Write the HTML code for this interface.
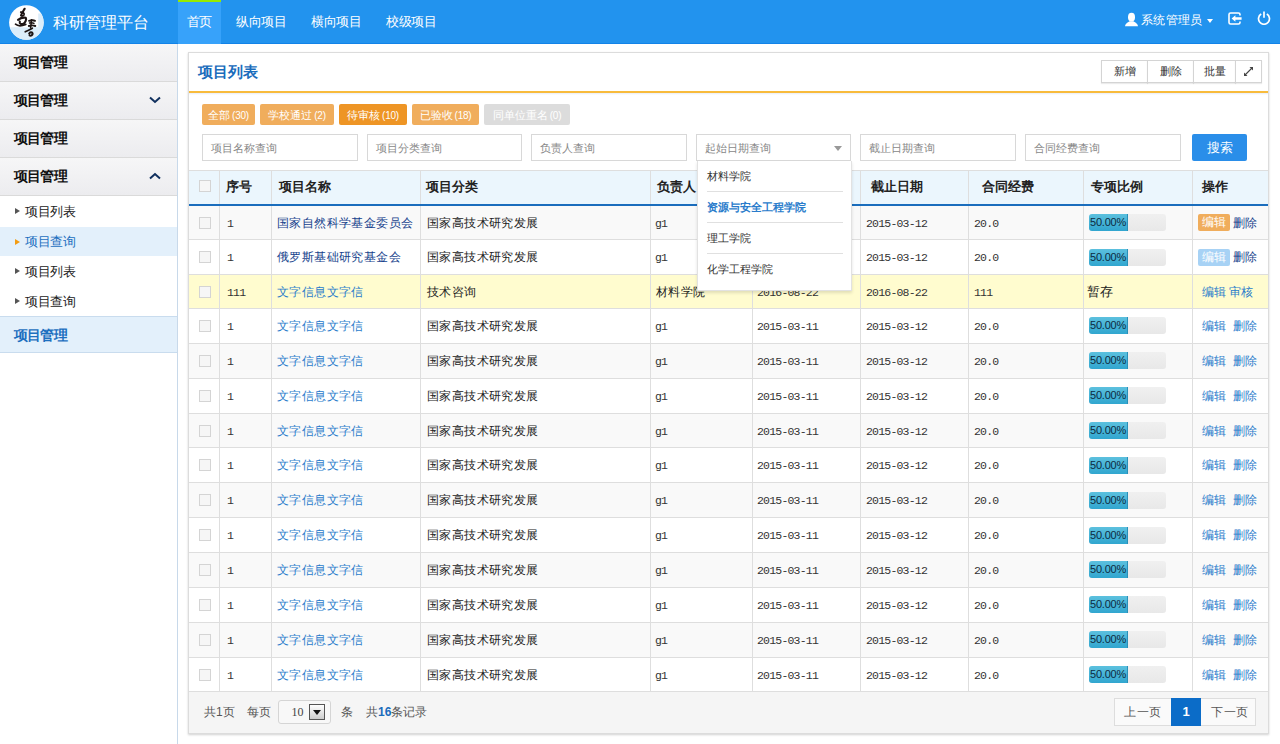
<!DOCTYPE html>
<html><head><meta charset="utf-8"><style>
*{box-sizing:border-box;margin:0;padding:0}
html,body{width:1280px;height:744px;overflow:hidden;background:#fff;font-family:"Liberation Sans",sans-serif;font-size:12px;color:#333}
.a{position:absolute}
#hdr{left:0;top:0;width:1280px;height:44px;background:#2293ee;border-bottom:1px solid #1283e8}
#logo{left:9px;top:5px;width:35px;height:35px;border-radius:50%;background:#fff;overflow:hidden}
#brand{left:53px;top:11px;font-size:16px;color:#fff;line-height:24px;white-space:nowrap}
.nav{top:0;height:44px;line-height:43px;font-size:13px;letter-spacing:-0.4px;color:#fff;white-space:nowrap}
#nav0{left:178px;width:43px;height:44px;background:#37a2fa;text-align:center}
#nav0:before{content:"";position:absolute;left:0;top:0;width:43px;height:2px;background:#97ea00}
#side{left:0;top:44px;width:178px;height:700px;border-right:1px solid #c8d9ea;background:#fff}
.mi{position:relative;height:38px;line-height:37px;border-bottom:1px solid #dadada;background:linear-gradient(#f6f6f7,#ececef);font-size:14px;letter-spacing:-0.8px;font-weight:bold;color:#111;padding-left:14px;white-space:nowrap}
.chev{position:absolute;left:149px;top:14px}
.si{position:relative;height:30px;line-height:30px;font-size:13px;letter-spacing:-0.3px;color:#222;padding-left:25px;white-space:nowrap}
.si:before{content:"";position:absolute;left:15px;top:11.5px;border-left:5px solid #555;border-top:3.5px solid transparent;border-bottom:3.5px solid transparent}
.si.on{background:#e3f0fb;color:#1d6fbf}
.si.on:before{border-left-color:#f39c12}
#panel{left:188px;top:52px;width:1081px;height:682px;border:1px solid #dcdcdc;box-shadow:0 1px 2px rgba(0,0,0,.18);background:#fff}
#ptitle{left:198px;top:60px;font-size:15px;font-weight:bold;color:#1a6cbc;line-height:24px;white-space:nowrap}
#oline{left:189px;top:91px;width:1079px;height:2px;background:#f8bb3c}
#oshadow{left:189px;top:93px;width:1079px;height:2px;background:linear-gradient(#e9edf5,#fff)}
.bg{top:60px;height:23px;border:1px solid #d4d4d4;background:#fff;font-size:11px;line-height:20px;text-align:center;color:#333;box-shadow:0 1px 1px rgba(0,0,0,.08)}
.fb{top:104px;height:21px;line-height:22px;border-radius:2px;color:#fff;font-size:11px;text-align:center;white-space:nowrap}
.inp{top:134px;width:156px;height:27px;border:1px solid #d8d8d8;line-height:27px;padding-left:8px;color:#888;font-size:11px;white-space:nowrap}
#search{left:1192px;top:134px;width:55px;height:27px;background:#2a8ee9;border-radius:2px;color:#fff;font-size:13px;line-height:27px;text-align:center}
#thead{left:189px;top:170px;width:1079px;height:34px;background:#ebf6fd;border-top:1px solid #dedede}
#tline{left:189px;top:204px;width:1079px;height:2px;background:#1a6dbd}
.th{top:171px;height:33px;line-height:31px;font-size:13px;font-weight:bold;color:#222;white-space:nowrap}
.vl{width:1px;background:#dedede}
.row{left:189px;width:1079px;border-bottom:1px solid #dedede}
.td{font-size:12px;letter-spacing:0.4px;color:#333;white-space:nowrap}
.mono{font-family:"Liberation Mono",monospace;font-size:11.5px;letter-spacing:-0.8px;color:#333}
.cb{width:12px;height:12px;border:1px solid #d4d4d4;background:#f6f6f6}
.pb{width:77px;height:17px;border-radius:3px;background:linear-gradient(#f0f0f0,#e8e8e8);overflow:hidden}
.pbf{left:0;top:0;width:39px;height:17px;background:linear-gradient(#5bc0de,#31a6cf);border-right:1px solid #2a8fb8;color:#0d2b3f;font-size:11px;letter-spacing:-0.2px;line-height:17px;padding-left:1px;white-space:nowrap}
.fb s{text-decoration:none;font-size:10px;margin-left:2px;letter-spacing:-0.2px}
.eb{width:32px;height:17px;border-radius:2px;color:#fff;font-size:12px;line-height:17px;text-align:center}
.lk{color:#2a7ccb;font-size:12px;white-space:nowrap}
#foot{left:189px;top:692px;width:1079px;height:41px;background:#f5f5f5}
#dd{left:696.5px;top:161px;width:155.5px;height:130px;background:#fff;border:1px solid #e2e2e2;border-top:none;box-shadow:0 2px 3px rgba(0,0,0,.12)}
.ddi{left:9px;width:136px;height:31px;line-height:31px;font-size:11px;color:#333;border-bottom:1px solid #e0e0e0;white-space:nowrap}
</style></head><body>
<div id="hdr" class="a">
<svg class="a" style="left:8px;top:4px" width="38" height="38" viewBox="0 0 38 38"><defs><clipPath id="cc"><circle cx="18.4" cy="18.5" r="17.3"/></clipPath></defs><circle cx="18.4" cy="18.5" r="17.3" fill="#fff"/><g clip-path="url(#cc)" fill="#dcedfa"><path d="M0 23.5 C10 23 20 24 30.5 23 L30.5 40 L0 40Z"/><path d="M30.2 9.5 L40 9.5 L40 40 L30.2 40Z"/></g><g fill="none" stroke="#1d1414" stroke-linecap="round" stroke-linejoin="round"><path d="M16.6 4.8 C15.8 6.5 14 8.5 13.2 11.2" stroke-width="2.2"/><path d="M12.8 8.2 C14.8 8 16.5 8.8 16 10.8 C15.5 12.2 13.8 12.2 13 11.6" stroke-width="1.8"/><path d="M10 15.8 C12.5 14 15.5 13.4 17.8 13.8 C18.8 15.5 17.2 19.2 14.8 20 C12.8 20.5 11.3 19.6 11.8 17.6" stroke-width="2.1"/><path d="M7.5 20.2 C9.5 22 13.5 22.2 17.8 20.4" stroke-width="1.7"/><path d="M21 16.8 C23 16.2 25.5 16 27 16.8" stroke-width="1.9"/><path d="M23.5 15.8 C23.3 18.5 23 21 22.6 24" stroke-width="1.6"/><path d="M21.5 19 C23 18.6 25 18.8 26 19.4" stroke-width="1.4"/><path d="M20.8 22 C23 21.2 25.5 21.3 27.3 22" stroke-width="1.9"/><path d="M17.2 27.8 C19.5 26.6 22 25.6 24.4 24.2" stroke-width="1.6"/><path d="M21.2 29.6 C21.8 28 24.2 27.6 24.6 29.4 C24.8 31.2 22.8 32.2 21.6 31.4" stroke-width="2.1"/></g></svg>
<div id="brand" class="a">科研管理平台</div>
<div class="a nav" id="nav0">首页</div>
<div class="a nav" style="left:236px">纵向项目</div>
<div class="a nav" style="left:311px">横向项目</div>
<div class="a nav" style="left:386px">校级项目</div>
<svg class="a" style="left:1124px;top:12px" width="15" height="15" viewBox="0 0 15 15"><ellipse cx="7.5" cy="5.2" rx="3.5" ry="4.4" fill="#fff"/><path d="M1 14.2 L1.4 12.8 C2.2 11.2 4 10.2 5.6 9.2 L9.4 9.2 C11 10.2 12.8 11.2 13.6 12.8 L14 14.2Z" fill="#fff"/></svg>
<div class="a" style="left:1141px;top:11px;font-size:12px;letter-spacing:0.3px;color:#fff;line-height:18px;white-space:nowrap">系统管理员</div>
<div class="a" style="left:1207px;top:19px;border-top:4px solid #fff;border-left:3.5px solid transparent;border-right:3.5px solid transparent"></div>
<svg class="a" style="left:1228px;top:12px" width="14" height="13" viewBox="0 0 14 13"><path d="M12 3.6 V2.6 Q12 1 10.4 1 H2.6 Q1 1 1 2.6 V10.4 Q1 12 2.6 12 H10.4 Q12 12 12 10.4 V9.4" fill="none" stroke="#fff" stroke-width="1.6"/><path d="M3.6 6.5 L7.4 3.2 V5.3 H13.6 V7.7 H7.4 V9.8Z" fill="#fff"/></svg>
<svg class="a" style="left:1257px;top:11px" width="14" height="14" viewBox="0 0 14 14"><path d="M4.2 3 A5.5 5.5 0 1 0 9.8 3" fill="none" stroke="#fff" stroke-width="1.7"/><path d="M7 0.5 V6.8" stroke="#fff" stroke-width="1.7"/></svg>
</div>
<div id="side" class="a">
<div class="mi">项目管理</div>
<div class="mi">项目管理<svg class="chev" width="12" height="8" viewBox="0 0 12 8"><path d="M1 1.5 L6 6 L11 1.5" fill="none" stroke="#10305e" stroke-width="2"/></svg></div>
<div class="mi">项目管理</div>
<div class="mi">项目管理<svg class="chev" width="12" height="8" viewBox="0 0 12 8"><path d="M1 6.5 L6 2 L11 6.5" fill="none" stroke="#10305e" stroke-width="2"/></svg></div>
<div class="si" style="height:31px;line-height:32px">项目列表</div>
<div class="si on" style="height:29px;line-height:29px">项目查询</div>
<div class="si" style="line-height:31px">项目列表</div>
<div class="si" style="line-height:31px">项目查询</div>
<div class="mi" style="background:#e3f0fb;color:#1d6fbf;border-top:1px solid #c9dcee;border-bottom:1px solid #c9dcee;height:37px">项目管理</div>
</div>
<div id="panel" class="a"></div>
<div id="ptitle" class="a">项目列表</div>
<div id="oline" class="a"></div><div id="oshadow" class="a"></div>
<div class="a bg" style="left:1101px;width:47px">新增</div>
<div class="a bg" style="left:1147px;width:47px">删除</div>
<div class="a bg" style="left:1193px;width:43px">批量</div>
<div class="a bg" style="left:1235px;width:27px"><svg style="position:absolute;left:7px;top:5px" width="11" height="11" viewBox="0 0 11 11"><path d="M2 9 L9 2" stroke="#444" stroke-width="1.1"/><path d="M6.5 1 H10 V4.5Z M1 6.5 V10 H4.5Z" fill="#444"/></svg></div>
<div class="a fb" style="left:202px;width:53px;background:#f0ad5c">全部<s>(30)</s></div>
<div class="a fb" style="left:260px;width:74px;background:#f0ad5c">学校通过<s>(2)</s></div>
<div class="a fb" style="left:339px;width:68px;background:#ee9525">待审核<s>(10)</s></div>
<div class="a fb" style="left:412px;width:67px;background:#f0ad5c">已验收<s>(18)</s></div>
<div class="a fb" style="left:484px;width:86px;background:#dcdcdc">同单位重名<s>(0)</s></div>
<div class="a inp" style="left:202.00px;width:155.6px">项目名称查询</div>
<div class="a inp" style="left:366.60px;width:155.6px">项目分类查询</div>
<div class="a inp" style="left:531.20px;width:155.6px">负责人查询</div>
<div class="a inp" style="left:695.80px;width:155.6px">起始日期查询</div>
<div class="a inp" style="left:860.40px;width:155.6px">截止日期查询</div>
<div class="a inp" style="left:1025.00px;width:155.6px">合同经费查询</div>
<div class="a" style="left:834px;top:146px;border-top:5px solid #999;border-left:4px solid transparent;border-right:4px solid transparent"></div>
<div id="search" class="a">搜索</div>
<div id="thead" class="a"></div>
<div class="a cb" style="left:199px;top:180px"></div>
<div class="a th" style="left:226px">序号</div>
<div class="a th" style="left:279px">项目名称</div>
<div class="a th" style="left:426px">项目分类</div>
<div class="a th" style="left:656.5px">负责人</div>
<div class="a th" style="left:760px">起始日期</div>
<div class="a th" style="left:870.5px">截止日期</div>
<div class="a th" style="left:981.5px">合同经费</div>
<div class="a th" style="left:1091px">专项比例</div>
<div class="a th" style="left:1201.5px">操作</div>
<div class="a row" style="top:206.000px;height:34.000px;background:#f9f9f9;border-top:none"></div>
<div class="a cb" style="left:199px;top:217.000px"></div>
<div class="a td mono" style="left:227px;top:216.500px;line-height:14px">1</div>
<div class="a td" style="left:277px;top:213.500px;line-height:18px;color:#163f8c">国家自然科学基金委员会</div>
<div class="a td" style="left:427px;top:213.500px;line-height:18px;color:#222">国家高技术研究发展</div>
<div class="a td mono" style="left:655px;top:216.500px;line-height:14px">g1</div>
<div class="a td mono" style="left:757px;top:216.500px;line-height:14px">2015-03-12</div>
<div class="a td mono" style="left:866px;top:216.500px;line-height:14px">2015-03-12</div>
<div class="a td mono" style="left:974px;top:216.500px;line-height:14px">20.0</div>
<div class="a pb" style="left:1089px;top:214.000px"><div class="a pbf">50.00%</div></div>
<div class="a eb" style="left:1198px;top:214.000px;background:#f0ad5c">编辑</div>
<div class="a lk" style="left:1233px;top:213.500px;line-height:18px;color:#163f8c">删除</div>
<div class="a row" style="top:240.000px;height:35.000px;background:#fff;border-top:none"></div>
<div class="a cb" style="left:199px;top:251.000px"></div>
<div class="a td mono" style="left:227px;top:251.000px;line-height:14px">1</div>
<div class="a td" style="left:277px;top:248.000px;line-height:18px;color:#163f8c">俄罗斯基础研究基金会</div>
<div class="a td" style="left:427px;top:248.000px;line-height:18px;color:#222">国家高技术研究发展</div>
<div class="a td mono" style="left:655px;top:251.000px;line-height:14px">g1</div>
<div class="a td mono" style="left:757px;top:251.000px;line-height:14px">2015-03-12</div>
<div class="a td mono" style="left:866px;top:251.000px;line-height:14px">2015-03-12</div>
<div class="a td mono" style="left:974px;top:251.000px;line-height:14px">20.0</div>
<div class="a pb" style="left:1089px;top:248.500px"><div class="a pbf">50.00%</div></div>
<div class="a eb" style="left:1198px;top:248.500px;background:#a7d2f5">编辑</div>
<div class="a lk" style="left:1233px;top:248.000px;line-height:18px;color:#163f8c">删除</div>
<div class="a row" style="top:275.000px;height:34.000px;background:#fffccf;border-top:none"></div>
<div class="a cb" style="left:199px;top:286.000px"></div>
<div class="a td mono" style="left:227px;top:285.500px;line-height:14px">111</div>
<div class="a td" style="left:277px;top:282.500px;line-height:18px;color:#2a7ccb">文字信息文字信</div>
<div class="a td" style="left:427px;top:282.500px;line-height:18px;color:#222">技术咨询</div>
<div class="a td" style="left:656px;top:282.500px;line-height:18px;color:#222">材料学院</div>
<div class="a td mono" style="left:757px;top:285.500px;line-height:14px">2016-08-22</div>
<div class="a td mono" style="left:866px;top:285.500px;line-height:14px">2016-08-22</div>
<div class="a td mono" style="left:974px;top:285.500px;line-height:14px">111</div>
<div class="a td" style="left:1087px;top:282.500px;line-height:18px;color:#222;font-size:13px">暂存</div>
<div class="a lk" style="left:1202px;top:282.500px;line-height:18px">编辑 审核</div>
<div class="a row" style="top:309.000px;height:34.860px;background:#fff;border-top:none"></div>
<div class="a cb" style="left:199px;top:320.000px"></div>
<div class="a td mono" style="left:227px;top:319.930px;line-height:14px">1</div>
<div class="a td" style="left:277px;top:316.930px;line-height:18px;color:#2a7ccb">文字信息文字信</div>
<div class="a td" style="left:427px;top:316.930px;line-height:18px;color:#222">国家高技术研究发展</div>
<div class="a td mono" style="left:655px;top:319.930px;line-height:14px">g1</div>
<div class="a td mono" style="left:757px;top:319.930px;line-height:14px">2015-03-11</div>
<div class="a td mono" style="left:866px;top:319.930px;line-height:14px">2015-03-12</div>
<div class="a td mono" style="left:974px;top:319.930px;line-height:14px">20.0</div>
<div class="a pb" style="left:1089px;top:317.430px"><div class="a pbf">50.00%</div></div>
<div class="a lk" style="left:1202px;top:316.930px;line-height:18px">编辑</div>
<div class="a lk" style="left:1233px;top:316.930px;line-height:18px">删除</div>
<div class="a row" style="top:343.860px;height:34.860px;background:#f9f9f9;border-top:none"></div>
<div class="a cb" style="left:199px;top:354.860px"></div>
<div class="a td mono" style="left:227px;top:354.790px;line-height:14px">1</div>
<div class="a td" style="left:277px;top:351.790px;line-height:18px;color:#2a7ccb">文字信息文字信</div>
<div class="a td" style="left:427px;top:351.790px;line-height:18px;color:#222">国家高技术研究发展</div>
<div class="a td mono" style="left:655px;top:354.790px;line-height:14px">g1</div>
<div class="a td mono" style="left:757px;top:354.790px;line-height:14px">2015-03-11</div>
<div class="a td mono" style="left:866px;top:354.790px;line-height:14px">2015-03-12</div>
<div class="a td mono" style="left:974px;top:354.790px;line-height:14px">20.0</div>
<div class="a pb" style="left:1089px;top:352.290px"><div class="a pbf">50.00%</div></div>
<div class="a lk" style="left:1202px;top:351.790px;line-height:18px">编辑</div>
<div class="a lk" style="left:1233px;top:351.790px;line-height:18px">删除</div>
<div class="a row" style="top:378.720px;height:34.860px;background:#fff;border-top:none"></div>
<div class="a cb" style="left:199px;top:389.720px"></div>
<div class="a td mono" style="left:227px;top:389.650px;line-height:14px">1</div>
<div class="a td" style="left:277px;top:386.650px;line-height:18px;color:#2a7ccb">文字信息文字信</div>
<div class="a td" style="left:427px;top:386.650px;line-height:18px;color:#222">国家高技术研究发展</div>
<div class="a td mono" style="left:655px;top:389.650px;line-height:14px">g1</div>
<div class="a td mono" style="left:757px;top:389.650px;line-height:14px">2015-03-11</div>
<div class="a td mono" style="left:866px;top:389.650px;line-height:14px">2015-03-12</div>
<div class="a td mono" style="left:974px;top:389.650px;line-height:14px">20.0</div>
<div class="a pb" style="left:1089px;top:387.150px"><div class="a pbf">50.00%</div></div>
<div class="a lk" style="left:1202px;top:386.650px;line-height:18px">编辑</div>
<div class="a lk" style="left:1233px;top:386.650px;line-height:18px">删除</div>
<div class="a row" style="top:413.580px;height:34.860px;background:#f9f9f9;border-top:none"></div>
<div class="a cb" style="left:199px;top:424.580px"></div>
<div class="a td mono" style="left:227px;top:424.510px;line-height:14px">1</div>
<div class="a td" style="left:277px;top:421.510px;line-height:18px;color:#2a7ccb">文字信息文字信</div>
<div class="a td" style="left:427px;top:421.510px;line-height:18px;color:#222">国家高技术研究发展</div>
<div class="a td mono" style="left:655px;top:424.510px;line-height:14px">g1</div>
<div class="a td mono" style="left:757px;top:424.510px;line-height:14px">2015-03-11</div>
<div class="a td mono" style="left:866px;top:424.510px;line-height:14px">2015-03-12</div>
<div class="a td mono" style="left:974px;top:424.510px;line-height:14px">20.0</div>
<div class="a pb" style="left:1089px;top:422.010px"><div class="a pbf">50.00%</div></div>
<div class="a lk" style="left:1202px;top:421.510px;line-height:18px">编辑</div>
<div class="a lk" style="left:1233px;top:421.510px;line-height:18px">删除</div>
<div class="a row" style="top:448.440px;height:34.860px;background:#fff;border-top:none"></div>
<div class="a cb" style="left:199px;top:459.440px"></div>
<div class="a td mono" style="left:227px;top:459.370px;line-height:14px">1</div>
<div class="a td" style="left:277px;top:456.370px;line-height:18px;color:#2a7ccb">文字信息文字信</div>
<div class="a td" style="left:427px;top:456.370px;line-height:18px;color:#222">国家高技术研究发展</div>
<div class="a td mono" style="left:655px;top:459.370px;line-height:14px">g1</div>
<div class="a td mono" style="left:757px;top:459.370px;line-height:14px">2015-03-11</div>
<div class="a td mono" style="left:866px;top:459.370px;line-height:14px">2015-03-12</div>
<div class="a td mono" style="left:974px;top:459.370px;line-height:14px">20.0</div>
<div class="a pb" style="left:1089px;top:456.870px"><div class="a pbf">50.00%</div></div>
<div class="a lk" style="left:1202px;top:456.370px;line-height:18px">编辑</div>
<div class="a lk" style="left:1233px;top:456.370px;line-height:18px">删除</div>
<div class="a row" style="top:483.300px;height:34.860px;background:#f9f9f9;border-top:none"></div>
<div class="a cb" style="left:199px;top:494.300px"></div>
<div class="a td mono" style="left:227px;top:494.230px;line-height:14px">1</div>
<div class="a td" style="left:277px;top:491.230px;line-height:18px;color:#2a7ccb">文字信息文字信</div>
<div class="a td" style="left:427px;top:491.230px;line-height:18px;color:#222">国家高技术研究发展</div>
<div class="a td mono" style="left:655px;top:494.230px;line-height:14px">g1</div>
<div class="a td mono" style="left:757px;top:494.230px;line-height:14px">2015-03-11</div>
<div class="a td mono" style="left:866px;top:494.230px;line-height:14px">2015-03-12</div>
<div class="a td mono" style="left:974px;top:494.230px;line-height:14px">20.0</div>
<div class="a pb" style="left:1089px;top:491.730px"><div class="a pbf">50.00%</div></div>
<div class="a lk" style="left:1202px;top:491.230px;line-height:18px">编辑</div>
<div class="a lk" style="left:1233px;top:491.230px;line-height:18px">删除</div>
<div class="a row" style="top:518.160px;height:34.860px;background:#fff;border-top:none"></div>
<div class="a cb" style="left:199px;top:529.160px"></div>
<div class="a td mono" style="left:227px;top:529.090px;line-height:14px">1</div>
<div class="a td" style="left:277px;top:526.090px;line-height:18px;color:#2a7ccb">文字信息文字信</div>
<div class="a td" style="left:427px;top:526.090px;line-height:18px;color:#222">国家高技术研究发展</div>
<div class="a td mono" style="left:655px;top:529.090px;line-height:14px">g1</div>
<div class="a td mono" style="left:757px;top:529.090px;line-height:14px">2015-03-11</div>
<div class="a td mono" style="left:866px;top:529.090px;line-height:14px">2015-03-12</div>
<div class="a td mono" style="left:974px;top:529.090px;line-height:14px">20.0</div>
<div class="a pb" style="left:1089px;top:526.590px"><div class="a pbf">50.00%</div></div>
<div class="a lk" style="left:1202px;top:526.090px;line-height:18px">编辑</div>
<div class="a lk" style="left:1233px;top:526.090px;line-height:18px">删除</div>
<div class="a row" style="top:553.020px;height:34.860px;background:#f9f9f9;border-top:none"></div>
<div class="a cb" style="left:199px;top:564.020px"></div>
<div class="a td mono" style="left:227px;top:563.950px;line-height:14px">1</div>
<div class="a td" style="left:277px;top:560.950px;line-height:18px;color:#2a7ccb">文字信息文字信</div>
<div class="a td" style="left:427px;top:560.950px;line-height:18px;color:#222">国家高技术研究发展</div>
<div class="a td mono" style="left:655px;top:563.950px;line-height:14px">g1</div>
<div class="a td mono" style="left:757px;top:563.950px;line-height:14px">2015-03-11</div>
<div class="a td mono" style="left:866px;top:563.950px;line-height:14px">2015-03-12</div>
<div class="a td mono" style="left:974px;top:563.950px;line-height:14px">20.0</div>
<div class="a pb" style="left:1089px;top:561.450px"><div class="a pbf">50.00%</div></div>
<div class="a lk" style="left:1202px;top:560.950px;line-height:18px">编辑</div>
<div class="a lk" style="left:1233px;top:560.950px;line-height:18px">删除</div>
<div class="a row" style="top:587.880px;height:34.860px;background:#fff;border-top:none"></div>
<div class="a cb" style="left:199px;top:598.880px"></div>
<div class="a td mono" style="left:227px;top:598.810px;line-height:14px">1</div>
<div class="a td" style="left:277px;top:595.810px;line-height:18px;color:#2a7ccb">文字信息文字信</div>
<div class="a td" style="left:427px;top:595.810px;line-height:18px;color:#222">国家高技术研究发展</div>
<div class="a td mono" style="left:655px;top:598.810px;line-height:14px">g1</div>
<div class="a td mono" style="left:757px;top:598.810px;line-height:14px">2015-03-11</div>
<div class="a td mono" style="left:866px;top:598.810px;line-height:14px">2015-03-12</div>
<div class="a td mono" style="left:974px;top:598.810px;line-height:14px">20.0</div>
<div class="a pb" style="left:1089px;top:596.310px"><div class="a pbf">50.00%</div></div>
<div class="a lk" style="left:1202px;top:595.810px;line-height:18px">编辑</div>
<div class="a lk" style="left:1233px;top:595.810px;line-height:18px">删除</div>
<div class="a row" style="top:622.740px;height:34.860px;background:#f9f9f9;border-top:none"></div>
<div class="a cb" style="left:199px;top:633.740px"></div>
<div class="a td mono" style="left:227px;top:633.670px;line-height:14px">1</div>
<div class="a td" style="left:277px;top:630.670px;line-height:18px;color:#2a7ccb">文字信息文字信</div>
<div class="a td" style="left:427px;top:630.670px;line-height:18px;color:#222">国家高技术研究发展</div>
<div class="a td mono" style="left:655px;top:633.670px;line-height:14px">g1</div>
<div class="a td mono" style="left:757px;top:633.670px;line-height:14px">2015-03-11</div>
<div class="a td mono" style="left:866px;top:633.670px;line-height:14px">2015-03-12</div>
<div class="a td mono" style="left:974px;top:633.670px;line-height:14px">20.0</div>
<div class="a pb" style="left:1089px;top:631.170px"><div class="a pbf">50.00%</div></div>
<div class="a lk" style="left:1202px;top:630.670px;line-height:18px">编辑</div>
<div class="a lk" style="left:1233px;top:630.670px;line-height:18px">删除</div>
<div class="a row" style="top:657.600px;height:34.860px;background:#fff;border-top:none"></div>
<div class="a cb" style="left:199px;top:668.600px"></div>
<div class="a td mono" style="left:227px;top:668.530px;line-height:14px">1</div>
<div class="a td" style="left:277px;top:665.530px;line-height:18px;color:#2a7ccb">文字信息文字信</div>
<div class="a td" style="left:427px;top:665.530px;line-height:18px;color:#222">国家高技术研究发展</div>
<div class="a td mono" style="left:655px;top:668.530px;line-height:14px">g1</div>
<div class="a td mono" style="left:757px;top:668.530px;line-height:14px">2015-03-11</div>
<div class="a td mono" style="left:866px;top:668.530px;line-height:14px">2015-03-12</div>
<div class="a td mono" style="left:974px;top:668.530px;line-height:14px">20.0</div>
<div class="a pb" style="left:1089px;top:666.030px"><div class="a pbf">50.00%</div></div>
<div class="a lk" style="left:1202px;top:665.530px;line-height:18px">编辑</div>
<div class="a lk" style="left:1233px;top:665.530px;line-height:18px">删除</div>
<div class="a vl" style="left:219px;top:171px;height:520px"></div>
<div class="a vl" style="left:271px;top:171px;height:520px"></div>
<div class="a vl" style="left:420px;top:171px;height:520px"></div>
<div class="a vl" style="left:650px;top:171px;height:520px"></div>
<div class="a vl" style="left:752px;top:171px;height:520px"></div>
<div class="a vl" style="left:860px;top:171px;height:520px"></div>
<div class="a vl" style="left:968px;top:171px;height:520px"></div>
<div class="a vl" style="left:1083px;top:171px;height:520px"></div>
<div class="a vl" style="left:1192px;top:171px;height:520px"></div>
<div id="tline" class="a"></div>
<div id="foot" class="a"></div>
<div class="a" style="left:204px;top:703px;line-height:18px;font-size:12px;color:#555;white-space:nowrap">共1页</div>
<div class="a" style="left:247px;top:703px;line-height:18px;font-size:12px;color:#555;white-space:nowrap">每页</div>
<div class="a" style="left:278px;top:699.5px;width:53px;height:24.5px;border:1px solid #d5d5d5;border-radius:3px;background:#f8f8f8"></div>
<div class="a" style="left:291.5px;top:703px;line-height:18px;font-size:12px;font-family:'Liberation Serif',serif;color:#444">10</div>
<div class="a" style="left:309px;top:704px;width:15.5px;height:16px;border:1px solid #555;background:linear-gradient(#fff,#ccc)"><div class="a" style="left:3px;top:5px;border-top:5px solid #111;border-left:4px solid transparent;border-right:4px solid transparent"></div></div>
<div class="a" style="left:341px;top:703px;line-height:18px;font-size:12px;color:#555">条</div>
<div class="a" style="left:366px;top:703px;line-height:18px;font-size:12px;color:#555;white-space:nowrap">共<b style="color:#1a6cbc">16</b>条记录</div>
<div class="a" style="left:1114px;top:698px;width:142px;height:28px;border:1px solid #ddd;background:#fafafa"></div>
<div class="a" style="left:1124px;top:703px;line-height:18px;font-size:12px;letter-spacing:0.5px;color:#555">上一页</div>
<div class="a" style="left:1171px;top:698px;width:30px;height:28px;background:#0b6cc8;color:#fff;font-size:13px;font-weight:bold;line-height:28px;text-align:center">1</div>
<div class="a" style="left:1211px;top:703px;line-height:18px;font-size:12px;letter-spacing:0.5px;color:#555">下一页</div>
<div id="dd" class="a">
<div class="a ddi" style="top:0px;">材料学院</div>
<div class="a ddi" style="top:31px;color:#2a7ccb;font-weight:bold">资源与安全工程学院</div>
<div class="a ddi" style="top:62px;">理工学院</div>
<div class="a ddi" style="top:93px;border-bottom:none">化学工程学院</div>
</div>
</body></html>
